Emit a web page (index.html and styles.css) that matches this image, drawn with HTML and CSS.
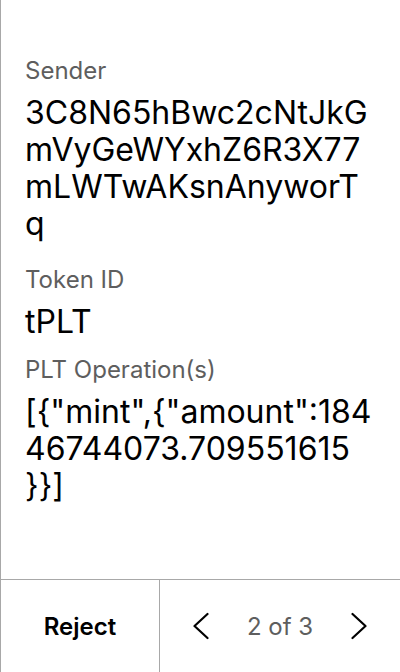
FILE: index.html
```html
<!DOCTYPE html>
<html>
<head>
<meta charset="utf-8">
<link rel="stylesheet" href="styles.css">
</head>
<body>
<div class="screen">
  <main class="details">
    <div class="field field-sender">
      <div class="label">Sender</div>
      <div class="value value-sender">3C8N65hBwc2cNtJkGmVyGeWYxhZ6R3X77mLWTwAKsnAnyworTq</div>
    </div>
    <div class="field">
      <div class="label">Token ID</div>
      <div class="value">tPLT</div>
    </div>
    <div class="field">
      <div class="label">PLT Operation(s)</div>
      <div class="value">[{"mint",{"amount":184<br>46744073.709551615<br>}}]</div>
    </div>
  </main>
  <footer class="footer">
    <button class="reject">Reject</button>
    <div class="pager">
      <svg class="chev" viewBox="0 0 16 28" width="16" height="28"><path d="M14.5 2 L1.5 14 L14.5 26" fill="none" stroke="#000" stroke-width="2.2" stroke-linecap="round" stroke-linejoin="round"/></svg>
      <span class="count">2 of 3</span>
      <svg class="chev" viewBox="0 0 16 28" width="16" height="28"><path d="M1.5 2 L14.5 14 L1.5 26" fill="none" stroke="#000" stroke-width="2.2" stroke-linecap="round" stroke-linejoin="round"/></svg>
    </div>
  </footer>
</div>
</body>
</html>
```

FILE: styles.css
```css
html, body {
  margin: 0;
  padding: 0;
  background: #fff;
}
body {
  font-family: Inter, "Noto Sans", sans-serif;
  color: #000;
}
.screen {
  width: 400px;
  height: 672px;
  box-sizing: border-box;
  border-left: 1px solid #a8a8a8;
  display: flex;
  flex-direction: column;
}
.details {
  flex: 1;
  padding: 56px 20px 0 24px;
  display: flex;
  flex-direction: column;
  gap: 15px;
}
.field {
  display: flex;
  flex-direction: column;
  gap: 8px;
}
.field-sender {
  margin-bottom: 8px;
}
.label {
  font-size: 24px;
  line-height: 30px;
  color: #5e5e5e;
}
.value {
  font-size: 32px;
  line-height: 37px;
  word-break: break-all;
  color: #000;
}
.value-sender {
  padding-right: 7px;
}
.footer {
  height: 92px;
  flex: none;
  border-top: 1px solid #a8a8a8;
  display: grid;
  grid-template-columns: 159px 1fr;
}
.reject {
  border: 0;
  border-right: 1px solid #a8a8a8;
  background: none;
  font-family: Inter, "Noto Sans", sans-serif;
  font-size: 24px;
  font-weight: 600;
  color: #000;
  padding: 0;
}
.pager {
  display: flex;
  align-items: center;
  justify-content: center;
  gap: 38px;
}
.count {
  font-size: 24px;
  color: #5e5e5e;
}
.chev {
  display: block;
}
```
